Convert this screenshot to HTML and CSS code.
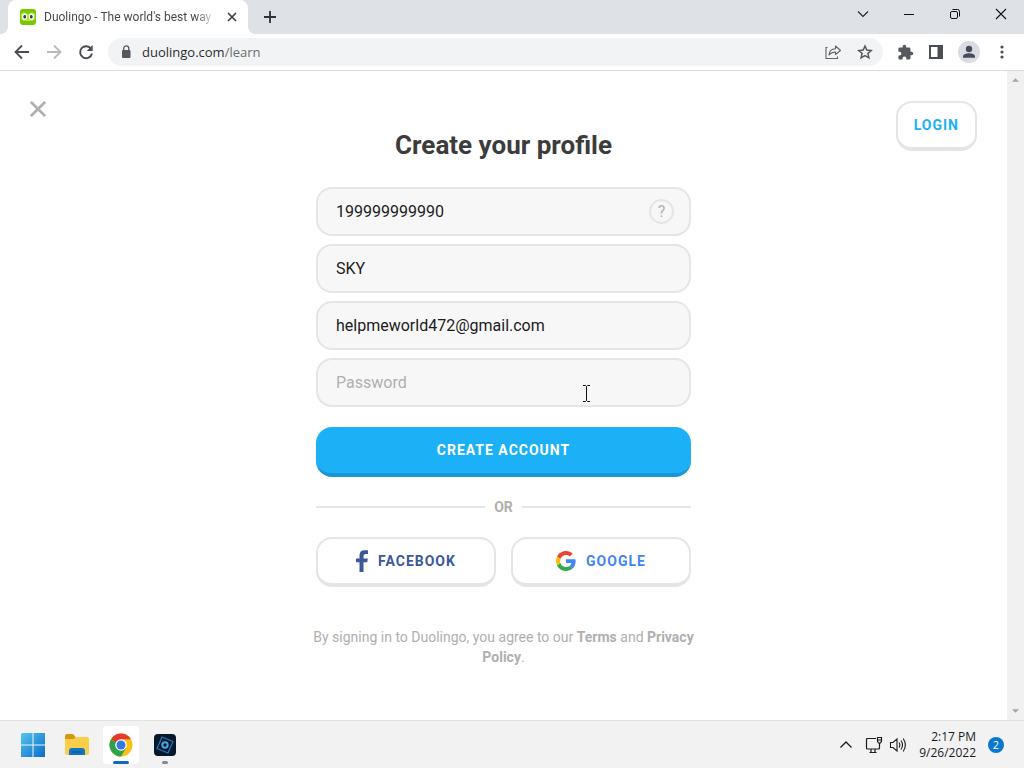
FILE: index.html
```html
<!DOCTYPE html>
<html lang="en">
<head>
    <meta charset="UTF-8">
    <meta name="viewport" content="width=device-width, initial-scale=1.0">
    <title>Duolingo - The world's best way</title>
    <link rel="stylesheet" href="styles.css">
</head>
<body>

    <!-- Tab strip -->
    <div class="tab-strip">
        <div class="tab">
            <svg class="favicon" viewBox="0 0 16 16" width="16" height="16">
                <rect width="16" height="16" rx="3" fill="#78c800"/>
                <path d="M1 4.500Q4 2.500 8 5Q12 2.500 15 4.500V9Q15 12 11.500 12H4.500Q1 12 1 9Z" fill="#a5ed3c"/>
                <rect x="2" y="4.500" width="5" height="6.500" rx="2.500" fill="#fff"/>
                <rect x="9" y="4.500" width="5" height="6.500" rx="2.500" fill="#fff"/>
                <rect x="3.500" y="6" width="2.500" height="3.500" rx="1.200" fill="#3c3c3c"/>
                <rect x="10" y="6" width="2.500" height="3.500" rx="1.200" fill="#3c3c3c"/>
                <path d="M6.500 10.500H9.500L8 12.500Z" fill="#ffc200"/>
            </svg>
            <span class="tab-title">Duolingo - The world's best way</span>
            <button class="icon-btn" type="button" aria-label="Close tab">
                <svg viewBox="0 0 16 16" width="16" height="16" fill="none" stroke="#3c4043" stroke-width="1.700"><path d="M4 4L12 12M12 4L4 12"/></svg>
            </button>
        </div>
        <button class="icon-btn new-tab" type="button" aria-label="New tab">
            <svg viewBox="0 0 16 16" width="16" height="16" fill="none" stroke="#303336" stroke-width="1.800"><path d="M8 2V14M2 8H14"/></svg>
        </button>
        <div class="window-controls">
            <button class="icon-btn" type="button" aria-label="Search tabs">
                <svg viewBox="0 0 16 16" width="16" height="16" fill="none" stroke="#222" stroke-width="1.100"><path d="M3 5.500L8 10.500L13 5.500"/></svg>
            </button>
            <button class="icon-btn" type="button" aria-label="Minimize">
                <svg viewBox="0 0 16 16" width="16" height="16" fill="none" stroke="#111"><path d="M3 8.500H13"/></svg>
            </button>
            <button class="icon-btn" type="button" aria-label="Restore">
                <svg viewBox="0 0 16 16" width="16" height="16" fill="none" stroke="#111"><rect x="3.500" y="5.500" width="7" height="7" rx="1.500"/><path d="M5.500 3.500H10.500Q12.500 3.500 12.500 5.500V10.500"/></svg>
            </button>
            <button class="icon-btn" type="button" aria-label="Close">
                <svg viewBox="0 0 16 16" width="16" height="16" fill="none" stroke="#111" stroke-width="1.100"><path d="M3 3L13 13M13 3L3 13"/></svg>
            </button>
        </div>
    </div>

    <!-- Address bar -->
    <div class="toolbar">
        <div class="nav">
            <button class="icon-btn" type="button" aria-label="Back">
                <svg viewBox="0 0 16 16" width="16" height="16" fill="none" stroke="#4a4d51" stroke-width="1.800"><path d="M15 8H2M8 1.500L1.500 8L8 14.500"/></svg>
            </button>
            <button class="icon-btn" type="button" aria-label="Forward">
                <svg viewBox="0 0 16 16" width="16" height="16" fill="none" stroke="#b8babd" stroke-width="1.800"><path d="M1 8H14M8 1.500L14.500 8L8 14.500"/></svg>
            </button>
            <button class="icon-btn" type="button" aria-label="Reload">
                <svg viewBox="0 0 16 16" width="16" height="16"><path d="M13.200 5A6 6 0 1 0 14 9.500" fill="none" stroke="#4a4d51" stroke-width="1.900"/><path d="M14.700 1V7H8.700Z" fill="#4a4d51"/></svg>
            </button>
        </div>
        <div class="address">
            <svg viewBox="0 0 16 16" width="16" height="16"><rect x="4" y="6" width="8.500" height="8" rx="1" fill="#55585c"/><path d="M5.700 6.500V4.500A2.500 2.500 0 0 1 10.800 4.500V6.500" fill="none" stroke="#55585c" stroke-width="1.300"/></svg>
            <span class="url">duolingo.com<span class="path">/learn</span></span>
            <button class="icon-btn" type="button" aria-label="Share">
                <svg viewBox="0 0 16 16" width="16" height="16" fill="none" stroke="#5f6368" stroke-width="1.100"><path d="M2.500 3.500H1V14.500H12.500V12.500"/><path d="M4 11Q4.500 5 10.500 4.800V2L15.500 6.500L10.500 10.500V8Q6.500 8 4 11Z" stroke-linejoin="round"/></svg>
            </button>
            <button class="icon-btn" type="button" aria-label="Bookmark">
                <svg viewBox="0 0 16 16" width="16" height="16" fill="none" stroke="#55585c" stroke-width="1.500"><path d="M8 2L9.800 6.100L14.300 6.500L10.900 9.400L11.900 13.800L8 11.500L4.100 13.800L5.100 9.400L1.700 6.500L6.200 6.100Z"/></svg>
            </button>
        </div>
        <button class="icon-btn" type="button" aria-label="Extensions">
            <svg viewBox="0 0 24 24" width="17" height="17" fill="#55585c"><path d="M20.500 11H19V7a2 2 0 0 0-2-2h-4V3.500a2.500 2.500 0 0 0-5 0V5H4a2 2 0 0 0-2 2v3.800h1.500a2.700 2.700 0 0 1 0 5.400H2V20a2 2 0 0 0 2 2h3.800v-1.500a2.700 2.700 0 0 1 5.400 0V22H17a2 2 0 0 0 2-2v-4h1.500a2.500 2.500 0 0 0 0-5z"/></svg>
        </button>
        <button class="icon-btn" type="button" aria-label="Side panel">
            <svg viewBox="0 0 16 16" width="16" height="16"><path d="M1 1H15V15H1ZM3 3V13H9.500V3Z" fill="#4a4d51" fill-rule="evenodd"/></svg>
        </button>
        <button class="icon-btn" type="button" aria-label="Profile">
            <svg viewBox="0 0 22 22" width="22" height="22"><circle cx="11" cy="11" r="11" fill="#dadce3"/><circle cx="11" cy="8" r="3.200" fill="#454b57"/><path d="M5 16.800V15Q6 12.200 11 12.200Q16 12.200 17 15V16.800Z" fill="#454b57"/></svg>
        </button>
        <button class="icon-btn" type="button" aria-label="Menu">
            <svg viewBox="0 0 16 16" width="16" height="16" fill="#4a4d51"><circle cx="8" cy="3" r="1.600"/><circle cx="8" cy="8" r="1.600"/><circle cx="8" cy="13" r="1.600"/></svg>
        </button>
    </div>

    <!-- Page -->
    <div class="viewport">
        <main class="page">
            <button class="icon-btn close-page" type="button" aria-label="Close">
                <svg viewBox="0 0 18 18" width="16" height="16" fill="none" stroke="#afafaf" stroke-width="3"><path d="M1 1L17 17M17 1L1 17"/></svg>
            </button>

            <form class="profile-form">
                <h1>Create your profile</h1>
                <div class="fields">
                    <div class="field">
                        <input type="text" aria-label="Age" value="199999999990">
                        <button class="hint" type="button">?</button>
                    </div>
                    <div class="field">
                        <input type="text" aria-label="Name" value="SKY">
                    </div>
                    <div class="field">
                        <input type="email" aria-label="Email" value="helpmeworld472@gmail.com">
                    </div>
                    <div class="field">
                        <input type="password" aria-label="Password" placeholder="Password">
                        <svg class="text-cursor" viewBox="0 0 9 17" width="9" height="17" fill="none" stroke="#111"><path d="M1 .5H3.500L4.500 1.500L5.500 .5H8M4.500 1.500V15.500M1 16.500H3.500L4.500 15.500L5.500 16.500H8"/></svg>
                    </div>
                </div>
                <button class="btn btn-primary" type="submit">Create account</button>
                <div class="divider">Or</div>
                <div class="social">
                    <button class="btn btn-facebook" type="button">
                        <svg viewBox="0 0 12 22" width="12" height="22"><path d="M3.500 22V12.200H0V8.500H3.500V5.500Q3.500 .3 8.500 .3H12V4H9.600Q7.500 4 7.500 6V8.500H11.800L11.300 12.200H7.500V22Z" fill="#3b5998"/></svg>
                        Facebook
                    </button>
                    <button class="btn btn-google" type="button">
                        <svg viewBox="0 0 48 48" width="20" height="20">
                            <path d="M24 9.500c3.540 0 6.710 1.220 9.210 3.600l6.850-6.850C35.900 2.380 30.470 0 24 0 14.620 0 6.510 5.380 2.560 13.220l7.980 6.190C12.430 13.720 17.740 9.500 24 9.500z" fill="#ea4335"/>
                            <path d="M46.980 24.550c0-1.570-.15-3.090-.38-4.550H24v9.020h12.940c-.58 2.960-2.260 5.480-4.780 7.180l7.730 6c4.510-4.180 7.090-10.360 7.090-17.650z" fill="#4285f4"/>
                            <path d="M10.530 28.590c-.48-1.450-.76-2.990-.76-4.590s.27-3.140.76-4.590l-7.980-6.190C.92 16.460 0 20.120 0 24s.92 7.540 2.560 10.780l7.970-6.190z" fill="#fbbc05"/>
                            <path d="M24 48c6.480 0 11.930-2.130 15.890-5.810l-7.730-6c-2.150 1.450-4.920 2.300-8.160 2.300-6.260 0-11.570-4.220-13.470-9.910l-7.980 6.190C6.510 42.620 14.620 48 24 48z" fill="#34a853"/>
                        </svg>
                        Google
                    </button>
                </div>
                <p class="legal">By signing in to Duolingo, you agree to our <a href="#">Terms</a> and <a href="#">Privacy Policy</a>.</p>
            </form>

            <button class="btn btn-login" type="button">Login</button>
        </main>
        <div class="scrollbar">
            <svg viewBox="0 0 8 4" width="7" height="4" fill="#a3a3a3"><path d="M0 4L4 0L8 4Z"/></svg>
            <svg viewBox="0 0 8 4" width="7" height="4" fill="#a3a3a3"><path d="M0 0L4 4L8 0Z"/></svg>
        </div>
    </div>

    <!-- Taskbar -->
    <div class="taskbar">
        <div class="apps">
            <button class="app" type="button" aria-label="Start">
                <svg viewBox="0 0 24 24" width="24" height="24">
                    <defs><linearGradient id="win" x1="0" y1="0" x2="24" y2="24" gradientUnits="userSpaceOnUse"><stop offset="0" stop-color="#55c5f0"/><stop offset="1" stop-color="#0a6cca"/></linearGradient></defs>
                    <path d="M1 0H11.500V11.500H0V1ZM12.500 0H24V11.500H12.500ZM0 12.500H11.500V24H0ZM12.500 12.500H24V24H12.500Z" fill="url(#win)"/>
                </svg>
            </button>
            <button class="app" type="button" aria-label="File Explorer">
                <svg viewBox="0 0 26 24" width="26" height="24">
                    <path d="M1 3Q1 1 3 1H9L11.500 4V8H1Z" fill="#d9960f"/>
                    <path d="M1 6H10L12 4H23Q25 4 25 6V20Q25 22 23 22H3Q1 22 1 20Z" fill="#fbce4a"/>
                    <path d="M5 22V18Q5 15 8 15H18Q21 15 21 18V22Z" fill="#1474c4"/>
                    <path d="M8 19H18" stroke="#0d5da5" stroke-width="1.500"/>
                </svg>
            </button>
            <button class="app active" type="button" aria-label="Chrome">
                <svg viewBox="0 0 24 24" width="24" height="24">
                    <circle cx="12" cy="12" r="11.500" fill="#fbc116"/>
                    <path d="M12 12L2.040 6.250A11.500 11.500 0 0 1 21.960 6.250H12Z" fill="#e33b2e"/>
                    <path d="M12 12L2.040 6.250A11.500 11.500 0 0 0 12 23.500L17 15Z" fill="#2da14c"/>
                    <circle cx="12" cy="12" r="5.800" fill="#fff"/>
                    <circle cx="12" cy="12" r="4.500" fill="#3578e5"/>
                </svg>
            </button>
            <button class="app running" type="button" aria-label="Photo app">
                <svg viewBox="0 0 22 22" width="22" height="22">
                    <rect width="22" height="22" rx="4" fill="#06192c"/>
                    <g fill="none" stroke="#2878b4" stroke-width="1.200"><path d="M8 3L19 7.500L14 19L3 14.500Z"/></g>
                    <circle cx="11" cy="11" r="2.700" fill="none" stroke="#49a5ea" stroke-width="2"/>
                </svg>
            </button>
        </div>
        <div class="tray">
            <svg viewBox="0 0 14 14" width="14" height="14" fill="none" stroke="#1c1c1c" stroke-width="1.300"><path d="M1.500 9.500L7 4L12.500 9.500"/></svg>
            <div class="status">
                <svg viewBox="0 0 18 18" width="18" height="18" fill="none" stroke="#1c1c1c" stroke-width="1.200"><path d="M11 2.500H2.500Q1.500 2.500 1.500 3.500V12Q1.500 13 2.500 13H13.500Q14.500 13 14.500 12V7.500M4.500 16.500H11.500M6 13V16.500M10 13V16.500M12.500 1.500H16.500V5L15.500 7H13.500L12.500 5ZM12.500 4H16.500M14.500 7V10"/></svg>
                <svg viewBox="0 0 18 18" width="18" height="18" fill="none" stroke="#1c1c1c" stroke-width="1.100"><path d="M1.500 6.500H4L8 3V15L4 11.500H1.500ZM10 6.500Q11.800 9 10 11.500M12 4.500Q15 9 12 13.500M14.200 2.500Q18.500 9 14.200 15.500"/></svg>
            </div>
            <div class="clock">2:17 PM<br>9/26/2022</div>
            <span class="badge">2</span>
        </div>
    </div>

</body>
</html>
```
FILE: styles.css
```css
/* General Page Styles */
* {
    box-sizing: border-box;
}

body {
    margin: 0;
    min-height: 100vh;
    display: flex;
    flex-direction: column;
    background-color: #fff;
    font-family: "Open Sans", sans-serif;
}

button, input {
    font-family: inherit;
}

svg {
    display: block;
    flex: none;
}

.icon-btn {
    display: flex;
    flex: none;
    padding: 0;
    border: none;
    background: none;
    cursor: pointer;
}

/* Tab strip */
.tab-strip {
    display: flex;
    align-items: center;
    height: 34px;
    padding: 0 15px 0 8px;
    background-color: #dee1e6;
}

.tab {
    position: relative;
    display: flex;
    align-items: center;
    gap: 8px;
    width: 240px;
    height: 34px;
    padding: 0 8px 0 12px;
    border-radius: 8px 8px 0 0;
    background-color: #fff;
}

.tab::before, .tab::after {
    content: "";
    position: absolute;
    bottom: 0;
    width: 8px;
    height: 8px;
}

.tab::before {
    right: 100%;
    background: radial-gradient(circle at 0 0, #dee1e6 8px, #fff 8px);
}

.tab::after {
    left: 100%;
    background: radial-gradient(circle at 100% 0, #dee1e6 8px, #fff 8px);
}

.tab-title {
    flex: 1;
    overflow: hidden;
    white-space: nowrap;
    font-family: Roboto, sans-serif;
    font-size: 12px;
    color: #45484c;
    mask-image: linear-gradient(to right, #000 88%, transparent);
}

.new-tab {
    margin-left: 14px;
}

.window-controls {
    display: flex;
    gap: 30px;
    margin-left: auto;
    padding-bottom: 6px;
}

/* Address bar */
.toolbar {
    display: flex;
    align-items: center;
    gap: 14px;
    height: 37px;
    padding: 0 14px;
    border-bottom: 1px solid #d8dadd;
}

.nav {
    display: flex;
    gap: 16px;
}

.address {
    display: flex;
    flex: 1;
    align-items: center;
    gap: 16px;
    height: 28px;
    padding: 0 10px;
    border-radius: 14px;
    background-color: #f1f3f4;
}

.url {
    flex: 1;
    margin-left: -8px;
    font-size: 13px;
    color: #2b2d30;
}

.path {
    color: #6a6e73;
}

/* Page */
.viewport {
    display: flex;
    flex: 1;
    font-family: Roboto, sans-serif;
}

.page {
    display: grid;
    grid-template-columns: 1fr 375px 1fr;
    align-items: start;
    flex: 1;
    padding: 30px;
}

.close-page {
    justify-self: start;
}

.scrollbar {
    display: flex;
    flex-direction: column;
    align-items: center;
    justify-content: space-between;
    width: 17px;
    padding: 7px 0;
    background-color: #f1f1f1;
}

.profile-form {
    padding-top: 28px;
}

h1 {
    margin: 0 0 26px;
    font-size: 26px;
    line-height: 32px;
    text-align: center;
    color: #3c3c3c;
}

.fields {
    display: grid;
    gap: 8px;
    margin-bottom: 20px;
}

.field {
    position: relative;
}

.field input {
    display: block;
    width: 100%;
    height: 49px;
    padding: 0 18px;
    border: 2px solid #e5e5e5;
    border-radius: 16px;
    background-color: #f7f7f7;
    font-size: 16px;
    color: #1c1c1c;
}

.field input::placeholder {
    color: #afafaf;
}

.hint {
    position: absolute;
    top: 12px;
    right: 17px;
    width: 25px;
    height: 25px;
    padding: 0;
    border: 2px solid #e5e5e5;
    border-radius: 50%;
    background-color: #f7f7f7;
    font-size: 16px;
    color: #afafaf;
}

.text-cursor {
    position: absolute;
    top: 27px;
    right: 100px;
}

.btn {
    display: flex;
    align-items: center;
    justify-content: center;
    gap: 10px;
    height: 50px;
    padding: 0 16px;
    border: 2px solid #e5e5e5;
    border-bottom-width: 4px;
    border-radius: 16px;
    background-color: #fff;
    font-size: 14px;
    font-weight: 700;
    letter-spacing: 1px;
    text-transform: uppercase;
    cursor: pointer;
}

.btn-primary {
    width: 100%;
    border: none;
    border-bottom: 4px solid #1899d6;
    background-color: #1cb0f6;
    color: #fff;
}

.btn-login {
    justify-self: end;
    color: #1cb0f6;
}

.btn-facebook {
    color: #3b5998;
}

.btn-google {
    color: #4285f4;
}

.divider {
    display: flex;
    align-items: center;
    gap: 9px;
    margin: 20px 0;
    font-size: 14px;
    font-weight: 700;
    line-height: 20px;
    text-transform: uppercase;
    color: #afafaf;
}

.divider::before, .divider::after {
    content: "";
    flex: 1;
    height: 2px;
    background-color: #e5e5e5;
}

.social {
    display: grid;
    grid-template-columns: 1fr 1fr;
    gap: 15px;
}

.legal {
    margin: 40px -8px 0;
    font-size: 14px;
    line-height: 20px;
    text-align: center;
    color: #afafaf;
}

.legal a {
    font-weight: 700;
    color: inherit;
    text-decoration: none;
}

/* Taskbar */
.taskbar {
    display: flex;
    align-items: center;
    justify-content: space-between;
    height: 48px;
    padding: 0 20px 0 15px;
    border-top: 1px solid #e2e2e2;
    background-color: #f2f2f2;
}

.apps {
    display: flex;
    gap: 8px;
}

.app {
    position: relative;
    display: flex;
    align-items: center;
    justify-content: center;
    width: 36px;
    height: 38px;
    padding: 0;
    border: none;
    border-radius: 4px;
    background: none;
}

.app.active {
    background-color: #fff;
}

.app.active::after, .app.running::after {
    content: "";
    position: absolute;
    bottom: 0;
    width: 16px;
    height: 3px;
    border-radius: 2px;
    background-color: #0f6cbd;
}

.app.running::after {
    width: 6px;
    background-color: #8a8a8a;
}

.tray {
    display: flex;
    align-items: center;
    gap: 12px;
}

.status {
    display: flex;
    gap: 6px;
}

.clock {
    font-size: 12px;
    line-height: 16px;
    text-align: right;
    color: #1c1c1c;
}

.badge {
    width: 16px;
    height: 16px;
    border-radius: 50%;
    background-color: #0a78d0;
    font-size: 11px;
    line-height: 16px;
    text-align: center;
    color: #fff;
}
```
